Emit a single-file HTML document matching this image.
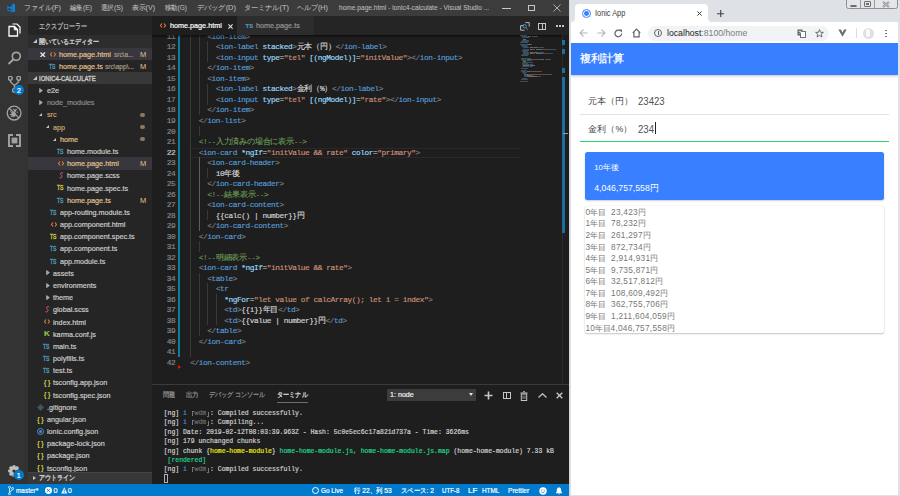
<!DOCTYPE html><html><head><meta charset="utf-8"><style>
*{margin:0;padding:0;box-sizing:border-box}
html,body{width:900px;height:496px;overflow:hidden;background:#1e1e1e}
body{position:relative;font-family:"Liberation Sans",sans-serif}
.a{position:absolute}
.t{position:absolute;white-space:pre;line-height:1;-webkit-text-stroke:0.2px}
#ion .t,.nostroke{-webkit-text-stroke:0}
#ion .hdr{-webkit-text-stroke:0.3px}
.m{font-family:"Liberation Mono",monospace}
.cj{letter-spacing:-0.2px}
</style></head><body>

<div class="a" style="left:0;top:0;width:569px;height:16px;background:#3c3c3c"></div>
<svg class="a" style="left:6px;top:3px" width="10" height="10" viewBox="0 0 10 10">
<path d="M6.4 0.6 L9 0.9 V8.8 L6.4 9.3 Z" fill="#0e84d8"/>
<path d="M9 8.8 L6.4 9.3 L1 7.6 L1.6 6.8 L6.6 7.6 Z" fill="#0a78cc"/>
<path d="M0.6 2.6 L3.6 4.2 L5.8 2.4 L6.4 3 V6.4 L5.8 6.9 L3.6 5.1 L0.6 6.6 L1.5 4.6 Z" fill="#0d80d4"/>
</svg>
<div class="t" id="gen_1" style="left:24.00px;top:4.30px;font-size:7.3px;color:#b8b8b8;-webkit-text-stroke:0.1px;transform:scaleX(0.9912);transform-origin:0 0;">ファイル(F)</div>
<div class="t" id="gen_2" style="left:70.00px;top:4.30px;font-size:7.3px;color:#b8b8b8;-webkit-text-stroke:0.1px;transform:scaleX(0.9269);transform-origin:0 0;">編集(E)</div>
<div class="t" id="gen_3" style="left:101.00px;top:4.30px;font-size:7.3px;color:#b8b8b8;-webkit-text-stroke:0.1px;transform:scaleX(0.9269);transform-origin:0 0;">選択(S)</div>
<div class="t" id="gen_4" style="left:132.00px;top:4.30px;font-size:7.3px;color:#b8b8b8;-webkit-text-stroke:0.1px;transform:scaleX(0.9691);transform-origin:0 0;">表示(V)</div>
<div class="t" id="gen_5" style="left:165.00px;top:4.30px;font-size:7.3px;color:#b8b8b8;-webkit-text-stroke:0.1px;transform:scaleX(0.8962);transform-origin:0 0;">移動(G)</div>
<div class="t" id="gen_6" style="left:197.00px;top:4.30px;font-size:7.3px;color:#b8b8b8;-webkit-text-stroke:0.1px;transform:scaleX(1.0225);transform-origin:0 0;">デバッグ(D)</div>
<div class="t" id="gen_7" style="left:244.00px;top:4.30px;font-size:7.3px;color:#b8b8b8;-webkit-text-stroke:0.1px;transform:scaleX(1.0152);transform-origin:0 0;">ターミナル(T)</div>
<div class="t" id="gen_8" style="left:297.00px;top:4.30px;font-size:7.3px;color:#b8b8b8;-webkit-text-stroke:0.1px;transform:scaleX(0.9955);transform-origin:0 0;">ヘルプ(H)</div>
<div class="t" id="gen_9" style="left:338.80px;top:4.30px;font-size:7.3px;color:#b8b8b8;-webkit-text-stroke:0.1px;transform:scaleX(0.9039);transform-origin:0 0;">home.page.html - ionic4-calculate - Visual Studio ...</div>
<div class="a" style="left:502px;top:7.8px;width:8.5px;height:0.8px;background:#c8c8c8"></div>
<div class="a" style="left:528px;top:4.8px;width:6.5px;height:6.5px;border:0.8px solid #c8c8c8"></div>
<svg class="a" style="left:553px;top:4.2px" width="8" height="8"><path d="M0.5 0.5 L7.5 7.5 M7.5 0.5 L0.5 7.5" stroke="#c8c8c8" stroke-width="0.8"/></svg>
<div class="a" style="left:0;top:16px;width:28px;height:468px;background:#333333"></div>
<svg class="a" style="left:8px;top:23px" width="13" height="14" viewBox="0 0 13 14">
<path d="M4.5 1 H9 L12 4 V10.5" fill="none" stroke="#ffffff" stroke-width="1.2"/>
<path d="M1 3.5 H6.5 L9.5 6.5 V13 H1 Z" fill="none" stroke="#ffffff" stroke-width="1.3"/>
<path d="M6.3 3.5 V6.8 H9.5" fill="#ffffff" stroke="#ffffff" stroke-width="1"/>
</svg>
<svg class="a" style="left:7px;top:51px" width="15" height="14" viewBox="0 0 15 14">
<circle cx="9.3" cy="5.3" r="4" fill="none" stroke="#a2a2a2" stroke-width="1.7"/>
<path d="M6.5 8.2 L1.5 13" stroke="#a2a2a2" stroke-width="1.9"/>
</svg>
<svg class="a" style="left:8px;top:76px" width="13" height="17" viewBox="0 0 13 17">
<circle cx="2.3" cy="2.3" r="1.9" fill="none" stroke="#a2a2a2" stroke-width="1.35"/>
<circle cx="10.7" cy="2.3" r="1.9" fill="none" stroke="#a2a2a2" stroke-width="1.35"/>
<circle cx="6.5" cy="14.3" r="1.9" fill="none" stroke="#a2a2a2" stroke-width="1.35"/>
<path d="M2.5 4.2 V6 L6.5 9.5 V12.3 M10.5 4.2 V6 L6.5 9.5" fill="none" stroke="#a2a2a2" stroke-width="1.35"/>
</svg>
<div class="a" style="left:14px;top:85px;width:10px;height:10px;border-radius:50%;background:#007acc"></div>
<div class="t" style="left:14px;top:86.5px;width:10px;text-align:center;font-size:7px;color:#fff">2</div>
<svg class="a" style="left:6px;top:105px" width="16" height="16" viewBox="0 0 16 16">
<circle cx="8.1" cy="8.1" r="6.9" fill="none" stroke="#a2a2a2" stroke-width="1.3"/>
<path d="M3.3 3.3 L12.9 12.9" stroke="#a2a2a2" stroke-width="1.3"/>
<ellipse cx="7.6" cy="9.3" rx="2.3" ry="2.6" fill="#a2a2a2"/>
<circle cx="9" cy="5.6" r="1.3" fill="#a2a2a2"/>
<path d="M4.3 6.5 L6 7.7 M3.8 9.5 H5.5 M4.5 12 L6 10.8 M12 7 L10.8 7.5 M7.2 3.8 L8 5 M10.8 3.8 L10 5" stroke="#a2a2a2" stroke-width="0.9"/>
</svg>
<svg class="a" style="left:7.8px;top:134px" width="13" height="13" viewBox="0 0 13 13">
<path d="M5 1 H1 V12 H5 M8 1 H12 V12 H8" fill="none" stroke="#a2a2a2" stroke-width="1.9"/>
<rect x="3.6" y="3.6" width="5.8" height="5.8" fill="#a2a2a2"/>
</svg>
<svg class="a" style="left:8.2px;top:464.5px" width="12" height="12" viewBox="0 0 12 12">
<path d="M10.31 4.38 L11.86 4.69 L11.86 7.31 L10.31 7.62 L10.19 7.90 L11.07 9.21 L9.21 11.07 L7.90 10.19 L7.62 10.31 L7.31 11.86 L4.69 11.86 L4.38 10.31 L4.10 10.19 L2.79 11.07 L0.93 9.21 L1.81 7.90 L1.69 7.62 L0.14 7.31 L0.14 4.69 L1.69 4.38 L1.81 4.10 L0.93 2.79 L2.79 0.93 L4.10 1.81 L4.38 1.69 L4.69 0.14 L7.31 0.14 L7.62 1.69 L7.90 1.81 L9.21 0.93 L11.07 2.79 L10.19 4.10 Z" fill="#c0c0c0"/>
<circle cx="6" cy="6" r="1.6" fill="#333"/>
</svg>
<div class="a" style="left:13.8px;top:470.3px;width:10px;height:10px;border-radius:50%;background:#007acc;box-shadow:0 0 0 0.5px #333"></div>
<div class="t" style="left:13.8px;top:472px;width:10px;text-align:center;font-size:7px;color:#fff">1</div>
<div class="a" style="left:28px;top:16px;width:124px;height:468px;background:#252526"></div>
<div class="t" id="gen_10" style="left:39.20px;top:23.10px;font-size:7.5px;color:#bbbbbb;transform:scaleX(0.7578);transform-origin:0 0;">エクスプローラー</div>
<div class="a" style="left:28px;top:35px;width:124px;height:13px;background:#2d2d2e"></div>
<div class="a" style="left:33px;top:39px;width:0;height:0;border-left:4px solid transparent;border-bottom:4px solid #c5c5c5"></div>
<div class="t" id="gen_11" style="left:39.20px;top:38.20px;font-size:7px;color:#cccccc;-webkit-text-stroke:0.35px;transform:scaleX(0.8629);transform-origin:0 0;">開いているエディター</div>
<div class="a" style="left:28px;top:48px;width:124px;height:12px;background:#37373d"></div>
<svg class="a" style="left:40px;top:51.5px" width="5.5" height="5.5"><path d="M0.5 0.5 L5 5 M5 0.5 L0.5 5" stroke="#e8e8e8" stroke-width="1.3"/></svg>
<svg class="a" style="left:49.5px;top:51.5px" width="6" height="5" viewBox="0 0 6 5"><path d="M2 0.5 L0.5 2.5 L2 4.5 M4 0.5 L5.5 2.5 L4 4.5" fill="none" stroke="#e37933" stroke-width="1.1"/></svg>
<div class="t" id="treeref" style="left:59.00px;top:50.90px;font-size:8px;color:#e2c08d;transform:scaleX(0.9028);transform-origin:0 0;">home.page.html</div>
<div class="t" id="gen_13" style="left:113.80px;top:52.00px;font-size:6.8px;color:#a59a86;transform:scaleX(0.9507);transform-origin:0 0;">src\a...</div>
<div class="t" style="left:140px;top:51px;font-size:7.5px;color:#e2c08d;-webkit-text-stroke:0">M</div>
<div class="t" style="left:48.5px;top:63.6px;font-size:6.3px;color:#519aba;-webkit-text-stroke:0.35px;transform:scaleX(0.8);transform-origin:0 0">TS</div>
<div class="t" style="left:59.00px;top:63.10px;font-size:8px;color:#e2c08d;transform:scaleX(0.9028);transform-origin:0 0;">home.page.ts</div>
<div class="t" id="gen_14" style="left:104.90px;top:64.20px;font-size:6.8px;color:#a59a86;transform:scaleX(0.9751);transform-origin:0 0;">src\app\...</div>
<div class="t" style="left:140px;top:63px;font-size:7.5px;color:#e2c08d;-webkit-text-stroke:0">M</div>
<div class="a" style="left:28px;top:72px;width:124px;height:12px;background:#383838"></div>
<div class="a" style="left:33px;top:76px;width:0;height:0;border-left:4px solid transparent;border-bottom:4px solid #c5c5c5"></div>
<div class="t" id="gen_15" style="left:39.20px;top:74.80px;font-size:7px;color:#cccccc;-webkit-text-stroke:0.35px;transform:scaleX(0.8540);transform-origin:0 0;">IONIC4-CALCULATE</div>
<div class="a" style="left:28px;top:84px;width:124px;height:388px;overflow:hidden">
<svg class="a" style="left:11.40px;top:3.79px" width="4" height="5.2"><path d="M0.6 0.5 L3.4 2.6 L0.6 4.7 Z" fill="#a8a8a8" stroke="#c5c5c5" stroke-width="0.6"/></svg>
<div class="t" style="left:18.70px;top:3.09px;font-size:8px;color:#cccccc;transform:scaleX(0.9028);transform-origin:0 0;">e2e</div>
<svg class="a" style="left:11.40px;top:15.97px" width="4" height="5.2"><path d="M0.6 0.5 L3.4 2.6 L0.6 4.7 Z" fill="#a8a8a8" stroke="#c5c5c5" stroke-width="0.6"/></svg>
<div class="t" style="left:18.70px;top:15.27px;font-size:8px;color:#8c8c8c;transform:scaleX(0.9028);transform-origin:0 0;">node_modules</div>
<div class="a" style="left:11.40px;top:29.25px;width:0;height:0;border-left:3.5px solid transparent;border-bottom:3.5px solid #c5c5c5"></div>
<div class="t" style="left:18.70px;top:27.45px;font-size:8px;color:#c9a46f;transform:scaleX(0.9028);transform-origin:0 0;">src</div>
<div class="a" style="left:112.2px;top:28.55px;width:4.5px;height:4.5px;border-radius:50%;background:#8a7a5e"></div>
<div class="a" style="left:18.05px;top:41.43px;width:0;height:0;border-left:3.5px solid transparent;border-bottom:3.5px solid #c5c5c5"></div>
<div class="t" style="left:25.45px;top:39.63px;font-size:8px;color:#c9a46f;transform:scaleX(0.9028);transform-origin:0 0;">app</div>
<div class="a" style="left:112.2px;top:40.73px;width:4.5px;height:4.5px;border-radius:50%;background:#8a7a5e"></div>
<div class="a" style="left:24.70px;top:53.61px;width:0;height:0;border-left:3.5px solid transparent;border-bottom:3.5px solid #c5c5c5"></div>
<div class="t" style="left:32.20px;top:51.81px;font-size:8px;color:#e2c08d;transform:scaleX(0.9028);transform-origin:0 0;">home</div>
<div class="a" style="left:112.2px;top:52.91px;width:4.5px;height:4.5px;border-radius:50%;background:#8a7a5e"></div>
<div class="t" style="left:28.95px;top:64.89px;font-size:6.3px;color:#519aba;-webkit-text-stroke:0.35px;transform:scaleX(0.8);transform-origin:0 0">TS</div>
<div class="t" style="left:38.95px;top:63.99px;font-size:8px;color:#cccccc;transform:scaleX(0.9028);transform-origin:0 0;">home.module.ts</div>
<div class="a" style="left:0;top:73.38px;width:124px;height:12.18px;background:#37373d"></div>
<svg class="a" style="left:29.95px;top:76.97px" width="6" height="5" viewBox="0 0 6 5"><path d="M2 0.5 L0.5 2.5 L2 4.5 M4 0.5 L5.5 2.5 L4 4.5" fill="none" stroke="#e37933" stroke-width="1.1"/></svg>
<div class="t" style="left:38.95px;top:76.17px;font-size:8px;color:#e2c08d;transform:scaleX(0.9028);transform-origin:0 0;">home.page.html</div>
<div class="t" style="left:112px;top:76.27px;font-size:7.5px;color:#e2c08d;-webkit-text-stroke:0">M</div>
<svg class="a" style="left:30.95px;top:88.15px" width="5" height="7" viewBox="0 0 5 7"><path d="M4.2 1.2 C3.5 0.2 1.2 0.4 1.6 2 C1.9 3.2 3.6 3.4 3 4.9 C2.5 6.2 0.6 6.4 0.4 5.4" fill="none" stroke="#f55385" stroke-width="0.9"/></svg>
<div class="t" style="left:38.95px;top:88.35px;font-size:8px;color:#cccccc;transform:scaleX(0.9028);transform-origin:0 0;">home.page.scss</div>
<div class="t" style="left:28.95px;top:101.42999999999999px;font-size:6.3px;color:#cbcb41;-webkit-text-stroke:0.35px;transform:scaleX(0.8);transform-origin:0 0">TS</div>
<div class="t" style="left:38.95px;top:100.53px;font-size:8px;color:#cccccc;transform:scaleX(0.9028);transform-origin:0 0;">home.page.spec.ts</div>
<div class="t" style="left:28.95px;top:113.61px;font-size:6.3px;color:#519aba;-webkit-text-stroke:0.35px;transform:scaleX(0.8);transform-origin:0 0">TS</div>
<div class="t" style="left:38.95px;top:112.71px;font-size:8px;color:#e2c08d;transform:scaleX(0.9028);transform-origin:0 0;">home.page.ts</div>
<div class="t" style="left:112px;top:112.81px;font-size:7.5px;color:#e2c08d;-webkit-text-stroke:0">M</div>
<div class="t" style="left:22.2px;top:125.78999999999999px;font-size:6.3px;color:#519aba;-webkit-text-stroke:0.35px;transform:scaleX(0.8);transform-origin:0 0">TS</div>
<div class="t" style="left:32.20px;top:124.89px;font-size:8px;color:#cccccc;transform:scaleX(0.9028);transform-origin:0 0;">app-routing.module.ts</div>
<svg class="a" style="left:23.2px;top:137.87px" width="6" height="5" viewBox="0 0 6 5"><path d="M2 0.5 L0.5 2.5 L2 4.5 M4 0.5 L5.5 2.5 L4 4.5" fill="none" stroke="#e37933" stroke-width="1.1"/></svg>
<div class="t" style="left:32.20px;top:137.07px;font-size:8px;color:#cccccc;transform:scaleX(0.9028);transform-origin:0 0;">app.component.html</div>
<div class="t" style="left:22.2px;top:150.15px;font-size:6.3px;color:#cbcb41;-webkit-text-stroke:0.35px;transform:scaleX(0.8);transform-origin:0 0">TS</div>
<div class="t" style="left:32.20px;top:149.25px;font-size:8px;color:#cccccc;transform:scaleX(0.9028);transform-origin:0 0;">app.component.spec.ts</div>
<div class="t" style="left:22.2px;top:162.32999999999998px;font-size:6.3px;color:#519aba;-webkit-text-stroke:0.35px;transform:scaleX(0.8);transform-origin:0 0">TS</div>
<div class="t" style="left:32.20px;top:161.43px;font-size:8px;color:#cccccc;transform:scaleX(0.9028);transform-origin:0 0;">app.component.ts</div>
<div class="t" style="left:22.2px;top:174.51px;font-size:6.3px;color:#519aba;-webkit-text-stroke:0.35px;transform:scaleX(0.8);transform-origin:0 0">TS</div>
<div class="t" style="left:32.20px;top:173.61px;font-size:8px;color:#cccccc;transform:scaleX(0.9028);transform-origin:0 0;">app.module.ts</div>
<svg class="a" style="left:18.05px;top:186.49px" width="4" height="5.2"><path d="M0.6 0.5 L3.4 2.6 L0.6 4.7 Z" fill="#a8a8a8" stroke="#c5c5c5" stroke-width="0.6"/></svg>
<div class="t" style="left:25.45px;top:185.79px;font-size:8px;color:#cccccc;transform:scaleX(0.9028);transform-origin:0 0;">assets</div>
<svg class="a" style="left:18.05px;top:198.67px" width="4" height="5.2"><path d="M0.6 0.5 L3.4 2.6 L0.6 4.7 Z" fill="#a8a8a8" stroke="#c5c5c5" stroke-width="0.6"/></svg>
<div class="t" style="left:25.45px;top:197.97px;font-size:8px;color:#cccccc;transform:scaleX(0.9028);transform-origin:0 0;">environments</div>
<svg class="a" style="left:18.05px;top:210.85px" width="4" height="5.2"><path d="M0.6 0.5 L3.4 2.6 L0.6 4.7 Z" fill="#a8a8a8" stroke="#c5c5c5" stroke-width="0.6"/></svg>
<div class="t" style="left:25.45px;top:210.15px;font-size:8px;color:#cccccc;transform:scaleX(0.9028);transform-origin:0 0;">theme</div>
<svg class="a" style="left:17.45px;top:222.13px" width="5" height="7" viewBox="0 0 5 7"><path d="M4.2 1.2 C3.5 0.2 1.2 0.4 1.6 2 C1.9 3.2 3.6 3.4 3 4.9 C2.5 6.2 0.6 6.4 0.4 5.4" fill="none" stroke="#f55385" stroke-width="0.9"/></svg>
<div class="t" style="left:25.45px;top:222.33px;font-size:8px;color:#cccccc;transform:scaleX(0.9028);transform-origin:0 0;">global.scss</div>
<svg class="a" style="left:16.45px;top:235.31px" width="6" height="5" viewBox="0 0 6 5"><path d="M2 0.5 L0.5 2.5 L2 4.5 M4 0.5 L5.5 2.5 L4 4.5" fill="none" stroke="#e37933" stroke-width="1.1"/></svg>
<div class="t" style="left:25.45px;top:234.51px;font-size:8px;color:#cccccc;transform:scaleX(0.9028);transform-origin:0 0;">index.html</div>
<div class="t" style="left:15.95px;top:245.99px;font-size:8px;font-weight:bold;color:#8dc149">K</div>
<div class="t" style="left:25.45px;top:246.69px;font-size:8px;color:#cccccc;transform:scaleX(0.9028);transform-origin:0 0;">karma.conf.js</div>
<div class="t" style="left:15.45px;top:259.77000000000004px;font-size:6.3px;color:#519aba;-webkit-text-stroke:0.35px;transform:scaleX(0.8);transform-origin:0 0">TS</div>
<div class="t" style="left:25.45px;top:258.87px;font-size:8px;color:#cccccc;transform:scaleX(0.9028);transform-origin:0 0;">main.ts</div>
<div class="t" style="left:15.45px;top:271.95000000000005px;font-size:6.3px;color:#519aba;-webkit-text-stroke:0.35px;transform:scaleX(0.8);transform-origin:0 0">TS</div>
<div class="t" style="left:25.45px;top:271.05px;font-size:8px;color:#cccccc;transform:scaleX(0.9028);transform-origin:0 0;">polyfills.ts</div>
<div class="t" style="left:15.45px;top:284.13px;font-size:6.3px;color:#519aba;-webkit-text-stroke:0.35px;transform:scaleX(0.8);transform-origin:0 0">TS</div>
<div class="t" style="left:25.45px;top:283.23px;font-size:8px;color:#cccccc;transform:scaleX(0.9028);transform-origin:0 0;">test.ts</div>
<div class="t" style="left:15.649999999999999px;top:295.10999999999996px;font-size:7px;font-weight:bold;color:#cbcb41;letter-spacing:1.3px;-webkit-text-stroke:0">{}</div>
<div class="t" style="left:25.45px;top:295.41px;font-size:8px;color:#cccccc;transform:scaleX(0.9028);transform-origin:0 0;">tsconfig.app.json</div>
<div class="t" style="left:15.649999999999999px;top:307.28999999999996px;font-size:7px;font-weight:bold;color:#cbcb41;letter-spacing:1.3px;-webkit-text-stroke:0">{}</div>
<div class="t" style="left:25.45px;top:307.59px;font-size:8px;color:#cccccc;transform:scaleX(0.9028);transform-origin:0 0;">tsconfig.spec.json</div>
<div class="a" style="left:10.2px;top:320.57px;width:5px;height:5px;transform:rotate(45deg);background:#41535b"></div>
<div class="t" style="left:18.70px;top:319.77px;font-size:8px;color:#cccccc;transform:scaleX(0.9028);transform-origin:0 0;">.gitignore</div>
<div class="t" style="left:8.899999999999999px;top:331.65px;font-size:7px;font-weight:bold;color:#cbcb41;letter-spacing:1.3px;-webkit-text-stroke:0">{}</div>
<div class="t" style="left:18.70px;top:331.95px;font-size:8px;color:#cccccc;transform:scaleX(0.9028);transform-origin:0 0;">angular.json</div>
<div class="a" style="left:9.2px;top:343.93px;width:7px;height:7px;border-radius:50%;border:1.2px solid #4f8fcd"></div><div class="a" style="left:11.2px;top:345.93px;width:3px;height:3px;border-radius:50%;background:#4f8fcd"></div>
<div class="t" style="left:18.70px;top:344.13px;font-size:8px;color:#cccccc;transform:scaleX(0.9028);transform-origin:0 0;">ionic.config.json</div>
<div class="t" style="left:8.899999999999999px;top:356.01px;font-size:7px;font-weight:bold;color:#cbcb41;letter-spacing:1.3px;-webkit-text-stroke:0">{}</div>
<div class="t" style="left:18.70px;top:356.31px;font-size:8px;color:#cccccc;transform:scaleX(0.9028);transform-origin:0 0;">package-lock.json</div>
<div class="t" style="left:8.899999999999999px;top:368.19px;font-size:7px;font-weight:bold;color:#cbcb41;letter-spacing:1.3px;-webkit-text-stroke:0">{}</div>
<div class="t" style="left:18.70px;top:368.49px;font-size:8px;color:#cccccc;transform:scaleX(0.9028);transform-origin:0 0;">package.json</div>
<div class="t" style="left:8.899999999999999px;top:380.37px;font-size:7px;font-weight:bold;color:#cbcb41;letter-spacing:1.3px;-webkit-text-stroke:0">{}</div>
<div class="t" style="left:18.70px;top:380.67px;font-size:8px;color:#cccccc;transform:scaleX(0.9028);transform-origin:0 0;">tsconfig.json</div>
</div>
<div class="a" style="left:28px;top:472px;width:124px;height:12px;background:#383838;border-top:1px solid #454545"></div>
<div class="a" style="left:33px;top:475.5px;width:0;height:0;border-top:2.5px solid transparent;border-bottom:2.5px solid transparent;border-left:3px solid #c5c5c5"></div>
<div class="t" id="gen_16" style="left:39.20px;top:474.40px;font-size:7px;color:#cccccc;-webkit-text-stroke:0.35px;transform:scaleX(0.8571);transform-origin:0 0;">アウトライン</div><div class="a" style="left:152px;top:16px;width:417px;height:468px;background:#1e1e1e"></div>
<div class="a" style="left:152px;top:16px;width:417px;height:19px;background:#252526"></div>
<div class="a" style="left:152px;top:16px;width:85px;height:19px;background:#1e1e1e"></div>
<div class="a" style="left:237px;top:16px;width:76.5px;height:19px;background:#2d2d2d"></div>
<svg class="a" style="left:160px;top:23.3px" width="6" height="5" viewBox="0 0 6 5"><path d="M2 0.5 L0.5 2.5 L2 4.5 M4 0.5 L5.5 2.5 L4 4.5" fill="none" stroke="#e37933" stroke-width="1.1"/></svg>
<div class="t" style="left:170.00px;top:22.40px;font-size:8px;color:#ffffff;transform:scaleX(0.9028);transform-origin:0 0;">home.page.html</div>
<svg class="a" style="left:227.8px;top:24px" width="5" height="5"><path d="M0.4 0.4 L4.6 4.6 M4.6 0.4 L0.4 4.6" stroke="#e0e0e0" stroke-width="1.1"/></svg>
<div class="t" style="left:245.5px;top:24px;font-size:5.8px;font-weight:bold;color:#519aba;letter-spacing:0.1px">TS</div>
<div class="t" style="left:255.60px;top:22.40px;font-size:8px;color:#969696;transform:scaleX(0.9028);transform-origin:0 0;">home.page.ts</div>
<svg class="a" style="left:519.5px;top:21.8px" width="10" height="9" viewBox="0 0 10 9">
<path d="M5.3 0.6 H9.2 V4.6" fill="none" stroke="#c5c5c5" stroke-width="0.9"/>
<path d="M0.6 3.6 H4 M0.6 3.6 V8.2 H4.6" fill="none" stroke="#c5c5c5" stroke-width="0.9"/>
<circle cx="4.6" cy="4.2" r="1.7" fill="none" stroke="#4d9bd6" stroke-width="0.9"/>
<path d="M5.8 5.5 L7.8 7.8" stroke="#4d9bd6" stroke-width="0.9"/>
</svg>
<div class="a" style="left:538px;top:23px;width:8px;height:7px;border:1px solid #c5c5c5"></div><div class="a" style="left:541.6px;top:23px;width:1px;height:7px;background:#c5c5c5"></div>
<div class="a" style="left:556px;top:25px;width:1.6px;height:1.6px;background:#c5c5c5"></div>
<div class="a" style="left:559.2px;top:25px;width:1.6px;height:1.6px;background:#c5c5c5"></div>
<div class="a" style="left:562.4px;top:25px;width:1.6px;height:1.6px;background:#c5c5c5"></div>
<div class="a" style="left:0;top:35px;width:569px;height:349px;overflow:hidden"><div class="a" style="left:0;top:-35px;width:569px;height:496px">
<div class="t m" style="left:160px;top:31.83px;width:15.2px;text-align:right;font-size:7.8px;letter-spacing:-0.43px;line-height:10.5px;color:#858585">11</div>
<div class="a" style="left:190.00px;top:30.93px;width:1.4px;height:10.5px;background:#393939"></div>
<div class="a" style="left:198.50px;top:30.93px;width:1.4px;height:10.5px;background:#393939"></div>
<div class="t m" style="left:190.3px;top:31.83px;font-size:7.8px;letter-spacing:-0.43px;line-height:10.5px;color:#d4d4d4;-webkit-text-stroke:0.15px"><span style="color:#d4d4d4">    </span><span style="color:#808080">&lt;</span><span style="color:#569cd6">ion-item</span><span style="color:#808080">&gt;</span></div>
<div class="t m" style="left:160px;top:42.35px;width:15.2px;text-align:right;font-size:7.8px;letter-spacing:-0.43px;line-height:10.5px;color:#858585">12</div>
<div class="a" style="left:190.00px;top:41.45px;width:1.4px;height:10.5px;background:#393939"></div>
<div class="a" style="left:198.50px;top:41.45px;width:1.4px;height:10.5px;background:#393939"></div>
<div class="a" style="left:207.00px;top:41.45px;width:1.4px;height:10.5px;background:#393939"></div>
<div class="t m" style="left:190.3px;top:42.35px;font-size:7.8px;letter-spacing:-0.43px;line-height:10.5px;color:#d4d4d4;-webkit-text-stroke:0.15px"><span style="color:#d4d4d4">      </span><span style="color:#808080">&lt;</span><span style="color:#569cd6">ion-label</span> <span style="color:#9cdcfe">stacked</span><span style="color:#808080">&gt;</span><span style="color:#d4d4d4"><span class="cj">元本（円）</span></span><span style="color:#808080">&lt;/</span><span style="color:#569cd6">ion-label</span><span style="color:#808080">&gt;</span></div>
<div class="t m" style="left:160px;top:52.87px;width:15.2px;text-align:right;font-size:7.8px;letter-spacing:-0.43px;line-height:10.5px;color:#858585">13</div>
<div class="a" style="left:190.00px;top:51.97px;width:1.4px;height:10.5px;background:#393939"></div>
<div class="a" style="left:198.50px;top:51.97px;width:1.4px;height:10.5px;background:#393939"></div>
<div class="a" style="left:207.00px;top:51.97px;width:1.4px;height:10.5px;background:#393939"></div>
<div class="t m" style="left:190.3px;top:52.87px;font-size:7.8px;letter-spacing:-0.43px;line-height:10.5px;color:#d4d4d4;-webkit-text-stroke:0.15px"><span style="color:#d4d4d4">      </span><span style="color:#808080">&lt;</span><span style="color:#569cd6">ion-input</span> <span style="color:#9cdcfe">type</span><span style="color:#d4d4d4">=</span><span style="color:#ce9178">"tel"</span> <span style="color:#9cdcfe">[(ngModel)]</span><span style="color:#d4d4d4">=</span><span style="color:#ce9178">"initValue"</span><span style="color:#808080">&gt;</span><span style="color:#808080">&lt;/</span><span style="color:#569cd6">ion-input</span><span style="color:#808080">&gt;</span></div>
<div class="t m" style="left:160px;top:63.39px;width:15.2px;text-align:right;font-size:7.8px;letter-spacing:-0.43px;line-height:10.5px;color:#858585">14</div>
<div class="a" style="left:190.00px;top:62.49px;width:1.4px;height:10.5px;background:#393939"></div>
<div class="a" style="left:198.50px;top:62.49px;width:1.4px;height:10.5px;background:#393939"></div>
<div class="t m" style="left:190.3px;top:63.39px;font-size:7.8px;letter-spacing:-0.43px;line-height:10.5px;color:#d4d4d4;-webkit-text-stroke:0.15px"><span style="color:#d4d4d4">    </span><span style="color:#808080">&lt;/</span><span style="color:#569cd6">ion-item</span><span style="color:#808080">&gt;</span></div>
<div class="t m" style="left:160px;top:73.91px;width:15.2px;text-align:right;font-size:7.8px;letter-spacing:-0.43px;line-height:10.5px;color:#858585">15</div>
<div class="a" style="left:190.00px;top:73.01px;width:1.4px;height:10.5px;background:#393939"></div>
<div class="a" style="left:198.50px;top:73.01px;width:1.4px;height:10.5px;background:#393939"></div>
<div class="t m" style="left:190.3px;top:73.91px;font-size:7.8px;letter-spacing:-0.43px;line-height:10.5px;color:#d4d4d4;-webkit-text-stroke:0.15px"><span style="color:#d4d4d4">    </span><span style="color:#808080">&lt;</span><span style="color:#569cd6">ion-item</span><span style="color:#808080">&gt;</span></div>
<div class="t m" style="left:160px;top:84.43px;width:15.2px;text-align:right;font-size:7.8px;letter-spacing:-0.43px;line-height:10.5px;color:#858585">16</div>
<div class="a" style="left:190.00px;top:83.53px;width:1.4px;height:10.5px;background:#393939"></div>
<div class="a" style="left:198.50px;top:83.53px;width:1.4px;height:10.5px;background:#393939"></div>
<div class="a" style="left:207.00px;top:83.53px;width:1.4px;height:10.5px;background:#393939"></div>
<div class="t m" style="left:190.3px;top:84.43px;font-size:7.8px;letter-spacing:-0.43px;line-height:10.5px;color:#d4d4d4;-webkit-text-stroke:0.15px"><span style="color:#d4d4d4">      </span><span style="color:#808080">&lt;</span><span style="color:#569cd6">ion-label</span> <span style="color:#9cdcfe">stacked</span><span style="color:#808080">&gt;</span><span style="color:#d4d4d4"><span class="cj">金利（</span>%<span class="cj">）</span></span><span style="color:#808080">&lt;/</span><span style="color:#569cd6">ion-label</span><span style="color:#808080">&gt;</span></div>
<div class="t m" style="left:160px;top:94.95px;width:15.2px;text-align:right;font-size:7.8px;letter-spacing:-0.43px;line-height:10.5px;color:#858585">17</div>
<div class="a" style="left:190.00px;top:94.05px;width:1.4px;height:10.5px;background:#393939"></div>
<div class="a" style="left:198.50px;top:94.05px;width:1.4px;height:10.5px;background:#393939"></div>
<div class="a" style="left:207.00px;top:94.05px;width:1.4px;height:10.5px;background:#393939"></div>
<div class="t m" style="left:190.3px;top:94.95px;font-size:7.8px;letter-spacing:-0.43px;line-height:10.5px;color:#d4d4d4;-webkit-text-stroke:0.15px"><span style="color:#d4d4d4">      </span><span style="color:#808080">&lt;</span><span style="color:#569cd6">ion-input</span> <span style="color:#9cdcfe">type</span><span style="color:#d4d4d4">=</span><span style="color:#ce9178">"tel"</span> <span style="color:#9cdcfe">[(ngModel)]</span><span style="color:#d4d4d4">=</span><span style="color:#ce9178">"rate"</span><span style="color:#808080">&gt;</span><span style="color:#808080">&lt;/</span><span style="color:#569cd6">ion-input</span><span style="color:#808080">&gt;</span></div>
<div class="t m" style="left:160px;top:105.47px;width:15.2px;text-align:right;font-size:7.8px;letter-spacing:-0.43px;line-height:10.5px;color:#858585">18</div>
<div class="a" style="left:190.00px;top:104.57px;width:1.4px;height:10.5px;background:#393939"></div>
<div class="a" style="left:198.50px;top:104.57px;width:1.4px;height:10.5px;background:#393939"></div>
<div class="t m" style="left:190.3px;top:105.47px;font-size:7.8px;letter-spacing:-0.43px;line-height:10.5px;color:#d4d4d4;-webkit-text-stroke:0.15px"><span style="color:#d4d4d4">    </span><span style="color:#808080">&lt;/</span><span style="color:#569cd6">ion-item</span><span style="color:#808080">&gt;</span></div>
<div class="t m" style="left:160px;top:115.99px;width:15.2px;text-align:right;font-size:7.8px;letter-spacing:-0.43px;line-height:10.5px;color:#858585">19</div>
<div class="a" style="left:190.00px;top:115.09px;width:1.4px;height:10.5px;background:#393939"></div>
<div class="t m" style="left:190.3px;top:115.99px;font-size:7.8px;letter-spacing:-0.43px;line-height:10.5px;color:#d4d4d4;-webkit-text-stroke:0.15px"><span style="color:#d4d4d4">  </span><span style="color:#808080">&lt;/</span><span style="color:#569cd6">ion-list</span><span style="color:#808080">&gt;</span></div>
<div class="t m" style="left:160px;top:126.51px;width:15.2px;text-align:right;font-size:7.8px;letter-spacing:-0.43px;line-height:10.5px;color:#858585">20</div>
<div class="a" style="left:190.00px;top:125.61px;width:1.4px;height:10.5px;background:#393939"></div>
<div class="a" style="left:198.50px;top:125.61px;width:1.4px;height:10.5px;background:#393939"></div>
<div class="t m" style="left:160px;top:137.03px;width:15.2px;text-align:right;font-size:7.8px;letter-spacing:-0.43px;line-height:10.5px;color:#858585">21</div>
<div class="a" style="left:190.00px;top:136.13px;width:1.4px;height:10.5px;background:#393939"></div>
<div class="t m" style="left:190.3px;top:137.03px;font-size:7.8px;letter-spacing:-0.43px;line-height:10.5px;color:#d4d4d4;-webkit-text-stroke:0.15px">  <span style="color:#6a9955">&lt;!--<span class="cj">入力済みの場合に表示</span>--&gt;</span></div>
<div class="a" style="left:190px;top:147.85px;width:330px;height:10.5px;border-top:1px solid #282828;border-bottom:1px solid #282828"></div>
<div class="t m" style="left:160px;top:147.55px;width:15.2px;text-align:right;font-size:7.8px;letter-spacing:-0.43px;line-height:10.5px;color:#c6c6c6">22</div>
<div class="a" style="left:190.00px;top:146.65px;width:1.4px;height:10.5px;background:#393939"></div>
<div class="t m" style="left:190.3px;top:147.55px;font-size:7.8px;letter-spacing:-0.43px;line-height:10.5px;color:#d4d4d4;-webkit-text-stroke:0.15px"><span style="color:#d4d4d4">  </span><span style="color:#808080">&lt;</span><span style="color:#569cd6">ion-card</span> <span style="color:#9cdcfe">*ngIf</span><span style="color:#d4d4d4">=</span><span style="color:#ce9178">"initValue &amp;&amp; rate"</span> <span style="color:#9cdcfe">color</span><span style="color:#d4d4d4">=</span><span style="color:#ce9178">"primary"</span><span style="color:#808080">&gt;</span></div>
<div class="t m" style="left:160px;top:158.07px;width:15.2px;text-align:right;font-size:7.8px;letter-spacing:-0.43px;line-height:10.5px;color:#858585">23</div>
<div class="a" style="left:190.00px;top:157.17px;width:1.4px;height:10.5px;background:#393939"></div>
<div class="a" style="left:198.50px;top:157.17px;width:1.4px;height:10.5px;background:#5e5e5e"></div>
<div class="t m" style="left:190.3px;top:158.07px;font-size:7.8px;letter-spacing:-0.43px;line-height:10.5px;color:#d4d4d4;-webkit-text-stroke:0.15px"><span style="color:#d4d4d4">    </span><span style="color:#808080">&lt;</span><span style="color:#569cd6">ion-card-header</span><span style="color:#808080">&gt;</span></div>
<div class="t m" style="left:160px;top:168.59px;width:15.2px;text-align:right;font-size:7.8px;letter-spacing:-0.43px;line-height:10.5px;color:#858585">24</div>
<div class="a" style="left:190.00px;top:167.69px;width:1.4px;height:10.5px;background:#393939"></div>
<div class="a" style="left:198.50px;top:167.69px;width:1.4px;height:10.5px;background:#5e5e5e"></div>
<div class="a" style="left:207.00px;top:167.69px;width:1.4px;height:10.5px;background:#393939"></div>
<div class="t m" style="left:190.3px;top:168.59px;font-size:7.8px;letter-spacing:-0.43px;line-height:10.5px;color:#d4d4d4;-webkit-text-stroke:0.15px"><span style="color:#d4d4d4">      10<span class="cj">年後</span></span></div>
<div class="t m" style="left:160px;top:179.11px;width:15.2px;text-align:right;font-size:7.8px;letter-spacing:-0.43px;line-height:10.5px;color:#858585">25</div>
<div class="a" style="left:190.00px;top:178.21px;width:1.4px;height:10.5px;background:#393939"></div>
<div class="a" style="left:198.50px;top:178.21px;width:1.4px;height:10.5px;background:#5e5e5e"></div>
<div class="t m" style="left:190.3px;top:179.11px;font-size:7.8px;letter-spacing:-0.43px;line-height:10.5px;color:#d4d4d4;-webkit-text-stroke:0.15px"><span style="color:#d4d4d4">    </span><span style="color:#808080">&lt;/</span><span style="color:#569cd6">ion-card-header</span><span style="color:#808080">&gt;</span></div>
<div class="t m" style="left:160px;top:189.63px;width:15.2px;text-align:right;font-size:7.8px;letter-spacing:-0.43px;line-height:10.5px;color:#858585">26</div>
<div class="a" style="left:190.00px;top:188.73px;width:1.4px;height:10.5px;background:#393939"></div>
<div class="a" style="left:198.50px;top:188.73px;width:1.4px;height:10.5px;background:#5e5e5e"></div>
<div class="t m" style="left:190.3px;top:189.63px;font-size:7.8px;letter-spacing:-0.43px;line-height:10.5px;color:#d4d4d4;-webkit-text-stroke:0.15px">    <span style="color:#6a9955">&lt;!--<span class="cj">結果表示</span>--&gt;</span></div>
<div class="t m" style="left:160px;top:200.15px;width:15.2px;text-align:right;font-size:7.8px;letter-spacing:-0.43px;line-height:10.5px;color:#858585">27</div>
<div class="a" style="left:190.00px;top:199.25px;width:1.4px;height:10.5px;background:#393939"></div>
<div class="a" style="left:198.50px;top:199.25px;width:1.4px;height:10.5px;background:#5e5e5e"></div>
<div class="t m" style="left:190.3px;top:200.15px;font-size:7.8px;letter-spacing:-0.43px;line-height:10.5px;color:#d4d4d4;-webkit-text-stroke:0.15px"><span style="color:#d4d4d4">    </span><span style="color:#808080">&lt;</span><span style="color:#569cd6">ion-card-content</span><span style="color:#808080">&gt;</span></div>
<div class="t m" style="left:160px;top:210.67px;width:15.2px;text-align:right;font-size:7.8px;letter-spacing:-0.43px;line-height:10.5px;color:#858585">28</div>
<div class="a" style="left:190.00px;top:209.77px;width:1.4px;height:10.5px;background:#393939"></div>
<div class="a" style="left:198.50px;top:209.77px;width:1.4px;height:10.5px;background:#5e5e5e"></div>
<div class="a" style="left:207.00px;top:209.77px;width:1.4px;height:10.5px;background:#393939"></div>
<div class="t m" style="left:190.3px;top:210.67px;font-size:7.8px;letter-spacing:-0.43px;line-height:10.5px;color:#d4d4d4;-webkit-text-stroke:0.15px"><span style="color:#d4d4d4">      {{calc() | number}}<span class="cj">円</span></span></div>
<div class="t m" style="left:160px;top:221.19px;width:15.2px;text-align:right;font-size:7.8px;letter-spacing:-0.43px;line-height:10.5px;color:#858585">29</div>
<div class="a" style="left:190.00px;top:220.29px;width:1.4px;height:10.5px;background:#393939"></div>
<div class="a" style="left:198.50px;top:220.29px;width:1.4px;height:10.5px;background:#5e5e5e"></div>
<div class="t m" style="left:190.3px;top:221.19px;font-size:7.8px;letter-spacing:-0.43px;line-height:10.5px;color:#d4d4d4;-webkit-text-stroke:0.15px"><span style="color:#d4d4d4">    </span><span style="color:#808080">&lt;/</span><span style="color:#569cd6">ion-card-content</span><span style="color:#808080">&gt;</span></div>
<div class="t m" style="left:160px;top:231.71px;width:15.2px;text-align:right;font-size:7.8px;letter-spacing:-0.43px;line-height:10.5px;color:#858585">30</div>
<div class="a" style="left:190.00px;top:230.81px;width:1.4px;height:10.5px;background:#393939"></div>
<div class="t m" style="left:190.3px;top:231.71px;font-size:7.8px;letter-spacing:-0.43px;line-height:10.5px;color:#d4d4d4;-webkit-text-stroke:0.15px"><span style="color:#d4d4d4">  </span><span style="color:#808080">&lt;/</span><span style="color:#569cd6">ion-card</span><span style="color:#808080">&gt;</span></div>
<div class="t m" style="left:160px;top:242.23px;width:15.2px;text-align:right;font-size:7.8px;letter-spacing:-0.43px;line-height:10.5px;color:#858585">31</div>
<div class="a" style="left:190.00px;top:241.33px;width:1.4px;height:10.5px;background:#393939"></div>
<div class="a" style="left:198.50px;top:241.33px;width:1.4px;height:10.5px;background:#393939"></div>
<div class="t m" style="left:160px;top:252.75px;width:15.2px;text-align:right;font-size:7.8px;letter-spacing:-0.43px;line-height:10.5px;color:#858585">32</div>
<div class="a" style="left:190.00px;top:251.85px;width:1.4px;height:10.5px;background:#393939"></div>
<div class="t m" style="left:190.3px;top:252.75px;font-size:7.8px;letter-spacing:-0.43px;line-height:10.5px;color:#d4d4d4;-webkit-text-stroke:0.15px">  <span style="color:#6a9955">&lt;!--<span class="cj">明細表示</span>--&gt;</span></div>
<div class="t m" style="left:160px;top:263.27px;width:15.2px;text-align:right;font-size:7.8px;letter-spacing:-0.43px;line-height:10.5px;color:#858585">33</div>
<div class="a" style="left:190.00px;top:262.37px;width:1.4px;height:10.5px;background:#393939"></div>
<div class="t m" style="left:190.3px;top:263.27px;font-size:7.8px;letter-spacing:-0.43px;line-height:10.5px;color:#d4d4d4;-webkit-text-stroke:0.15px"><span style="color:#d4d4d4">  </span><span style="color:#808080">&lt;</span><span style="color:#569cd6">ion-card</span> <span style="color:#9cdcfe">*ngIf</span><span style="color:#d4d4d4">=</span><span style="color:#ce9178">"initValue &amp;&amp; rate"</span><span style="color:#808080">&gt;</span></div>
<div class="t m" style="left:160px;top:273.79px;width:15.2px;text-align:right;font-size:7.8px;letter-spacing:-0.43px;line-height:10.5px;color:#858585">34</div>
<div class="a" style="left:190.00px;top:272.89px;width:1.4px;height:10.5px;background:#393939"></div>
<div class="a" style="left:198.50px;top:272.89px;width:1.4px;height:10.5px;background:#393939"></div>
<div class="t m" style="left:190.3px;top:273.79px;font-size:7.8px;letter-spacing:-0.43px;line-height:10.5px;color:#d4d4d4;-webkit-text-stroke:0.15px"><span style="color:#d4d4d4">    </span><span style="color:#808080">&lt;</span><span style="color:#569cd6">table</span><span style="color:#808080">&gt;</span></div>
<div class="t m" style="left:160px;top:284.31px;width:15.2px;text-align:right;font-size:7.8px;letter-spacing:-0.43px;line-height:10.5px;color:#858585">35</div>
<div class="a" style="left:190.00px;top:283.41px;width:1.4px;height:10.5px;background:#393939"></div>
<div class="a" style="left:198.50px;top:283.41px;width:1.4px;height:10.5px;background:#393939"></div>
<div class="a" style="left:207.00px;top:283.41px;width:1.4px;height:10.5px;background:#393939"></div>
<div class="t m" style="left:190.3px;top:284.31px;font-size:7.8px;letter-spacing:-0.43px;line-height:10.5px;color:#d4d4d4;-webkit-text-stroke:0.15px"><span style="color:#d4d4d4">      </span><span style="color:#808080">&lt;</span><span style="color:#569cd6">tr</span></div>
<div class="t m" style="left:160px;top:294.83px;width:15.2px;text-align:right;font-size:7.8px;letter-spacing:-0.43px;line-height:10.5px;color:#858585">36</div>
<div class="a" style="left:190.00px;top:293.93px;width:1.4px;height:10.5px;background:#393939"></div>
<div class="a" style="left:198.50px;top:293.93px;width:1.4px;height:10.5px;background:#393939"></div>
<div class="a" style="left:207.00px;top:293.93px;width:1.4px;height:10.5px;background:#393939"></div>
<div class="a" style="left:215.50px;top:293.93px;width:1.4px;height:10.5px;background:#393939"></div>
<div class="t m" style="left:190.3px;top:294.83px;font-size:7.8px;letter-spacing:-0.43px;line-height:10.5px;color:#d4d4d4;-webkit-text-stroke:0.15px">        <span style="color:#9cdcfe">*ngFor</span><span style="color:#d4d4d4">=</span><span style="color:#ce9178">"let value of calcArray(); let i = index"</span><span style="color:#808080">&gt;</span></div>
<div class="t m" style="left:160px;top:305.35px;width:15.2px;text-align:right;font-size:7.8px;letter-spacing:-0.43px;line-height:10.5px;color:#858585">37</div>
<div class="a" style="left:190.00px;top:304.45px;width:1.4px;height:10.5px;background:#393939"></div>
<div class="a" style="left:198.50px;top:304.45px;width:1.4px;height:10.5px;background:#393939"></div>
<div class="a" style="left:207.00px;top:304.45px;width:1.4px;height:10.5px;background:#393939"></div>
<div class="a" style="left:215.50px;top:304.45px;width:1.4px;height:10.5px;background:#393939"></div>
<div class="t m" style="left:190.3px;top:305.35px;font-size:7.8px;letter-spacing:-0.43px;line-height:10.5px;color:#d4d4d4;-webkit-text-stroke:0.15px"><span style="color:#d4d4d4">        </span><span style="color:#808080">&lt;</span><span style="color:#569cd6">td</span><span style="color:#808080">&gt;</span><span style="color:#d4d4d4">{{i}}<span class="cj">年目</span></span><span style="color:#808080">&lt;/</span><span style="color:#569cd6">td</span><span style="color:#808080">&gt;</span></div>
<div class="t m" style="left:160px;top:315.87px;width:15.2px;text-align:right;font-size:7.8px;letter-spacing:-0.43px;line-height:10.5px;color:#858585">38</div>
<div class="a" style="left:190.00px;top:314.97px;width:1.4px;height:10.5px;background:#393939"></div>
<div class="a" style="left:198.50px;top:314.97px;width:1.4px;height:10.5px;background:#393939"></div>
<div class="a" style="left:207.00px;top:314.97px;width:1.4px;height:10.5px;background:#393939"></div>
<div class="a" style="left:215.50px;top:314.97px;width:1.4px;height:10.5px;background:#393939"></div>
<div class="t m" style="left:190.3px;top:315.87px;font-size:7.8px;letter-spacing:-0.43px;line-height:10.5px;color:#d4d4d4;-webkit-text-stroke:0.15px"><span style="color:#d4d4d4">        </span><span style="color:#808080">&lt;</span><span style="color:#569cd6">td</span><span style="color:#808080">&gt;</span><span style="color:#d4d4d4">{{value | number}}<span class="cj">円</span></span><span style="color:#808080">&lt;/</span><span style="color:#569cd6">td</span><span style="color:#808080">&gt;</span></div>
<div class="t m" style="left:160px;top:326.39px;width:15.2px;text-align:right;font-size:7.8px;letter-spacing:-0.43px;line-height:10.5px;color:#858585">39</div>
<div class="a" style="left:190.00px;top:325.49px;width:1.4px;height:10.5px;background:#393939"></div>
<div class="a" style="left:198.50px;top:325.49px;width:1.4px;height:10.5px;background:#393939"></div>
<div class="t m" style="left:190.3px;top:326.39px;font-size:7.8px;letter-spacing:-0.43px;line-height:10.5px;color:#d4d4d4;-webkit-text-stroke:0.15px"><span style="color:#d4d4d4">    </span><span style="color:#808080">&lt;/</span><span style="color:#569cd6">table</span><span style="color:#808080">&gt;</span></div>
<div class="t m" style="left:160px;top:336.91px;width:15.2px;text-align:right;font-size:7.8px;letter-spacing:-0.43px;line-height:10.5px;color:#858585">40</div>
<div class="a" style="left:190.00px;top:336.01px;width:1.4px;height:10.5px;background:#393939"></div>
<div class="t m" style="left:190.3px;top:336.91px;font-size:7.8px;letter-spacing:-0.43px;line-height:10.5px;color:#d4d4d4;-webkit-text-stroke:0.15px"><span style="color:#d4d4d4">  </span><span style="color:#808080">&lt;/</span><span style="color:#569cd6">ion-card</span><span style="color:#808080">&gt;</span></div>
<div class="t m" style="left:160px;top:347.43px;width:15.2px;text-align:right;font-size:7.8px;letter-spacing:-0.43px;line-height:10.5px;color:#858585">41</div>
<div class="a" style="left:190.00px;top:346.53px;width:1.4px;height:10.5px;background:#393939"></div>
<div class="t m" style="left:160px;top:357.95px;width:15.2px;text-align:right;font-size:7.8px;letter-spacing:-0.43px;line-height:10.5px;color:#858585">42</div>
<div class="t m" style="left:190.3px;top:357.95px;font-size:7.8px;letter-spacing:-0.43px;line-height:10.5px;color:#d4d4d4;-webkit-text-stroke:0.15px"><span style="color:#808080">&lt;/</span><span style="color:#569cd6">ion-content</span><span style="color:#808080">&gt;</span></div>
<div class="a" style="left:178px;top:35px;width:2px;height:321.9px;background:#0c7d9d"></div>
<div class="a" style="left:178px;top:365px;width:0;height:0;border-top:2.5px solid transparent;border-bottom:2.5px solid transparent;border-left:3px solid #e51400"></div>
</div></div>
<div class="a" style="left:152px;top:35px;width:410px;height:3px;background:linear-gradient(rgba(0,0,0,0.55),rgba(0,0,0,0))"></div><div class="a" style="left:0;top:0;opacity:0.4">
<div class="a" style="left:520.00px;top:35.20px;width:0.56px;height:0.65px;background:#808080"></div>
<div class="a" style="left:520.56px;top:35.20px;width:5.60px;height:0.65px;background:#569cd6"></div>
<div class="a" style="left:526.16px;top:35.20px;width:0.56px;height:0.65px;background:#808080"></div>
<div class="a" style="left:521.12px;top:36.32px;width:0.56px;height:0.65px;background:#808080"></div>
<div class="a" style="left:521.68px;top:36.32px;width:6.16px;height:0.65px;background:#569cd6"></div>
<div class="a" style="left:528.40px;top:36.32px;width:2.80px;height:0.65px;background:#9cdcfe"></div>
<div class="a" style="left:531.76px;top:36.32px;width:5.04px;height:0.65px;background:#ce9178"></div>
<div class="a" style="left:536.80px;top:36.32px;width:0.56px;height:0.65px;background:#808080"></div>
<div class="a" style="left:522.24px;top:37.43px;width:0.56px;height:0.65px;background:#808080"></div>
<div class="a" style="left:522.80px;top:37.43px;width:5.04px;height:0.65px;background:#569cd6"></div>
<div class="a" style="left:527.84px;top:37.43px;width:0.56px;height:0.65px;background:#808080"></div>
<div class="a" style="left:523.36px;top:38.55px;width:2.24px;height:0.65px;background:#d4d4d4"></div>
<div class="a" style="left:522.24px;top:39.66px;width:1.12px;height:0.65px;background:#808080"></div>
<div class="a" style="left:523.36px;top:39.66px;width:5.04px;height:0.65px;background:#569cd6"></div>
<div class="a" style="left:528.40px;top:39.66px;width:0.56px;height:0.65px;background:#808080"></div>
<div class="a" style="left:521.12px;top:40.78px;width:1.12px;height:0.65px;background:#808080"></div>
<div class="a" style="left:522.24px;top:40.78px;width:6.16px;height:0.65px;background:#569cd6"></div>
<div class="a" style="left:528.40px;top:40.78px;width:0.56px;height:0.65px;background:#808080"></div>
<div class="a" style="left:520.00px;top:41.89px;width:1.12px;height:0.65px;background:#808080"></div>
<div class="a" style="left:521.12px;top:41.89px;width:5.60px;height:0.65px;background:#569cd6"></div>
<div class="a" style="left:526.72px;top:41.89px;width:0.56px;height:0.65px;background:#808080"></div>
<div class="a" style="left:520.00px;top:44.12px;width:0.56px;height:0.65px;background:#808080"></div>
<div class="a" style="left:520.56px;top:44.12px;width:6.16px;height:0.65px;background:#569cd6"></div>
<div class="a" style="left:527.28px;top:44.12px;width:3.92px;height:0.65px;background:#d4d4d4"></div>
<div class="a" style="left:531.20px;top:44.12px;width:0.56px;height:0.65px;background:#808080"></div>
<div class="a" style="left:521.12px;top:45.23px;width:0.56px;height:0.65px;background:#808080"></div>
<div class="a" style="left:521.68px;top:45.23px;width:4.48px;height:0.65px;background:#569cd6"></div>
<div class="a" style="left:526.16px;top:45.23px;width:0.56px;height:0.65px;background:#808080"></div>
<div class="a" style="left:522.24px;top:46.35px;width:0.56px;height:0.65px;background:#808080"></div>
<div class="a" style="left:522.80px;top:46.35px;width:4.48px;height:0.65px;background:#569cd6"></div>
<div class="a" style="left:527.28px;top:46.35px;width:0.56px;height:0.65px;background:#808080"></div>
<div class="a" style="left:523.36px;top:47.47px;width:0.56px;height:0.65px;background:#808080"></div>
<div class="a" style="left:523.92px;top:47.47px;width:5.04px;height:0.65px;background:#569cd6"></div>
<div class="a" style="left:529.52px;top:47.47px;width:3.92px;height:0.65px;background:#d4d4d4"></div>
<div class="a" style="left:533.44px;top:47.47px;width:0.56px;height:0.65px;background:#808080"></div>
<div class="a" style="left:534.00px;top:47.47px;width:2.80px;height:0.65px;background:#d4d4d4"></div>
<div class="a" style="left:536.80px;top:47.47px;width:1.12px;height:0.65px;background:#808080"></div>
<div class="a" style="left:537.92px;top:47.47px;width:5.04px;height:0.65px;background:#569cd6"></div>
<div class="a" style="left:542.96px;top:47.47px;width:0.56px;height:0.65px;background:#808080"></div>
<div class="a" style="left:523.36px;top:48.58px;width:0.56px;height:0.65px;background:#808080"></div>
<div class="a" style="left:523.92px;top:48.58px;width:5.04px;height:0.65px;background:#569cd6"></div>
<div class="a" style="left:529.52px;top:48.58px;width:2.24px;height:0.65px;background:#9cdcfe"></div>
<div class="a" style="left:532.32px;top:48.58px;width:2.80px;height:0.65px;background:#ce9178"></div>
<div class="a" style="left:535.68px;top:48.58px;width:6.16px;height:0.65px;background:#9cdcfe"></div>
<div class="a" style="left:542.40px;top:48.58px;width:6.16px;height:0.65px;background:#ce9178"></div>
<div class="a" style="left:548.56px;top:48.58px;width:0.56px;height:0.65px;background:#808080"></div>
<div class="a" style="left:549.12px;top:48.58px;width:1.12px;height:0.65px;background:#808080"></div>
<div class="a" style="left:550.24px;top:48.58px;width:5.04px;height:0.65px;background:#569cd6"></div>
<div class="a" style="left:555.28px;top:48.58px;width:0.56px;height:0.65px;background:#808080"></div>
<div class="a" style="left:522.24px;top:49.70px;width:1.12px;height:0.65px;background:#808080"></div>
<div class="a" style="left:523.36px;top:49.70px;width:4.48px;height:0.65px;background:#569cd6"></div>
<div class="a" style="left:527.84px;top:49.70px;width:0.56px;height:0.65px;background:#808080"></div>
<div class="a" style="left:522.24px;top:50.81px;width:0.56px;height:0.65px;background:#808080"></div>
<div class="a" style="left:522.80px;top:50.81px;width:4.48px;height:0.65px;background:#569cd6"></div>
<div class="a" style="left:527.28px;top:50.81px;width:0.56px;height:0.65px;background:#808080"></div>
<div class="a" style="left:523.36px;top:51.93px;width:0.56px;height:0.65px;background:#808080"></div>
<div class="a" style="left:523.92px;top:51.93px;width:5.04px;height:0.65px;background:#569cd6"></div>
<div class="a" style="left:529.52px;top:51.93px;width:3.92px;height:0.65px;background:#d4d4d4"></div>
<div class="a" style="left:533.44px;top:51.93px;width:0.56px;height:0.65px;background:#808080"></div>
<div class="a" style="left:534.00px;top:51.93px;width:2.80px;height:0.65px;background:#d4d4d4"></div>
<div class="a" style="left:536.80px;top:51.93px;width:1.12px;height:0.65px;background:#808080"></div>
<div class="a" style="left:537.92px;top:51.93px;width:5.04px;height:0.65px;background:#569cd6"></div>
<div class="a" style="left:542.96px;top:51.93px;width:0.56px;height:0.65px;background:#808080"></div>
<div class="a" style="left:523.36px;top:53.04px;width:0.56px;height:0.65px;background:#808080"></div>
<div class="a" style="left:523.92px;top:53.04px;width:5.04px;height:0.65px;background:#569cd6"></div>
<div class="a" style="left:529.52px;top:53.04px;width:2.24px;height:0.65px;background:#9cdcfe"></div>
<div class="a" style="left:532.32px;top:53.04px;width:2.80px;height:0.65px;background:#ce9178"></div>
<div class="a" style="left:535.68px;top:53.04px;width:6.16px;height:0.65px;background:#9cdcfe"></div>
<div class="a" style="left:542.40px;top:53.04px;width:3.36px;height:0.65px;background:#ce9178"></div>
<div class="a" style="left:545.76px;top:53.04px;width:0.56px;height:0.65px;background:#808080"></div>
<div class="a" style="left:546.32px;top:53.04px;width:1.12px;height:0.65px;background:#808080"></div>
<div class="a" style="left:547.44px;top:53.04px;width:5.04px;height:0.65px;background:#569cd6"></div>
<div class="a" style="left:552.48px;top:53.04px;width:0.56px;height:0.65px;background:#808080"></div>
<div class="a" style="left:522.24px;top:54.16px;width:1.12px;height:0.65px;background:#808080"></div>
<div class="a" style="left:523.36px;top:54.16px;width:4.48px;height:0.65px;background:#569cd6"></div>
<div class="a" style="left:527.84px;top:54.16px;width:0.56px;height:0.65px;background:#808080"></div>
<div class="a" style="left:521.12px;top:55.27px;width:1.12px;height:0.65px;background:#808080"></div>
<div class="a" style="left:522.24px;top:55.27px;width:4.48px;height:0.65px;background:#569cd6"></div>
<div class="a" style="left:526.72px;top:55.27px;width:0.56px;height:0.65px;background:#808080"></div>
<div class="a" style="left:521.12px;top:57.50px;width:9.52px;height:0.65px;background:#6a9955"></div>
<div class="a" style="left:521.12px;top:58.62px;width:0.56px;height:0.65px;background:#808080"></div>
<div class="a" style="left:521.68px;top:58.62px;width:4.48px;height:0.65px;background:#569cd6"></div>
<div class="a" style="left:526.72px;top:58.62px;width:2.80px;height:0.65px;background:#9cdcfe"></div>
<div class="a" style="left:530.08px;top:58.62px;width:10.64px;height:0.65px;background:#ce9178"></div>
<div class="a" style="left:541.28px;top:58.62px;width:2.80px;height:0.65px;background:#9cdcfe"></div>
<div class="a" style="left:544.64px;top:58.62px;width:5.04px;height:0.65px;background:#ce9178"></div>
<div class="a" style="left:549.68px;top:58.62px;width:0.56px;height:0.65px;background:#808080"></div>
<div class="a" style="left:522.24px;top:59.73px;width:0.56px;height:0.65px;background:#808080"></div>
<div class="a" style="left:522.80px;top:59.73px;width:8.40px;height:0.65px;background:#569cd6"></div>
<div class="a" style="left:531.20px;top:59.73px;width:0.56px;height:0.65px;background:#808080"></div>
<div class="a" style="left:523.36px;top:60.84px;width:2.24px;height:0.65px;background:#d4d4d4"></div>
<div class="a" style="left:522.24px;top:61.96px;width:1.12px;height:0.65px;background:#808080"></div>
<div class="a" style="left:523.36px;top:61.96px;width:8.40px;height:0.65px;background:#569cd6"></div>
<div class="a" style="left:531.76px;top:61.96px;width:0.56px;height:0.65px;background:#808080"></div>
<div class="a" style="left:522.24px;top:63.08px;width:6.16px;height:0.65px;background:#6a9955"></div>
<div class="a" style="left:522.24px;top:64.19px;width:0.56px;height:0.65px;background:#808080"></div>
<div class="a" style="left:522.80px;top:64.19px;width:8.96px;height:0.65px;background:#569cd6"></div>
<div class="a" style="left:531.76px;top:64.19px;width:0.56px;height:0.65px;background:#808080"></div>
<div class="a" style="left:523.36px;top:65.31px;width:4.48px;height:0.65px;background:#d4d4d4"></div>
<div class="a" style="left:528.40px;top:65.31px;width:0.56px;height:0.65px;background:#d4d4d4"></div>
<div class="a" style="left:529.52px;top:65.31px;width:5.04px;height:0.65px;background:#d4d4d4"></div>
<div class="a" style="left:522.24px;top:66.42px;width:1.12px;height:0.65px;background:#808080"></div>
<div class="a" style="left:523.36px;top:66.42px;width:8.96px;height:0.65px;background:#569cd6"></div>
<div class="a" style="left:532.32px;top:66.42px;width:0.56px;height:0.65px;background:#808080"></div>
<div class="a" style="left:521.12px;top:67.53px;width:1.12px;height:0.65px;background:#808080"></div>
<div class="a" style="left:522.24px;top:67.53px;width:4.48px;height:0.65px;background:#569cd6"></div>
<div class="a" style="left:526.72px;top:67.53px;width:0.56px;height:0.65px;background:#808080"></div>
<div class="a" style="left:521.12px;top:69.77px;width:6.16px;height:0.65px;background:#6a9955"></div>
<div class="a" style="left:521.12px;top:70.88px;width:0.56px;height:0.65px;background:#808080"></div>
<div class="a" style="left:521.68px;top:70.88px;width:4.48px;height:0.65px;background:#569cd6"></div>
<div class="a" style="left:526.72px;top:70.88px;width:2.80px;height:0.65px;background:#9cdcfe"></div>
<div class="a" style="left:530.08px;top:70.88px;width:10.64px;height:0.65px;background:#ce9178"></div>
<div class="a" style="left:540.72px;top:70.88px;width:0.56px;height:0.65px;background:#808080"></div>
<div class="a" style="left:522.24px;top:72.00px;width:0.56px;height:0.65px;background:#808080"></div>
<div class="a" style="left:522.80px;top:72.00px;width:2.80px;height:0.65px;background:#569cd6"></div>
<div class="a" style="left:525.60px;top:72.00px;width:0.56px;height:0.65px;background:#808080"></div>
<div class="a" style="left:523.36px;top:73.11px;width:0.56px;height:0.65px;background:#808080"></div>
<div class="a" style="left:523.92px;top:73.11px;width:1.12px;height:0.65px;background:#569cd6"></div>
<div class="a" style="left:524.48px;top:74.22px;width:3.36px;height:0.65px;background:#9cdcfe"></div>
<div class="a" style="left:528.40px;top:74.22px;width:22.96px;height:0.65px;background:#ce9178"></div>
<div class="a" style="left:551.36px;top:74.22px;width:0.56px;height:0.65px;background:#808080"></div>
<div class="a" style="left:524.48px;top:75.34px;width:0.56px;height:0.65px;background:#808080"></div>
<div class="a" style="left:525.04px;top:75.34px;width:1.12px;height:0.65px;background:#569cd6"></div>
<div class="a" style="left:526.16px;top:75.34px;width:0.56px;height:0.65px;background:#808080"></div>
<div class="a" style="left:526.72px;top:75.34px;width:3.92px;height:0.65px;background:#d4d4d4"></div>
<div class="a" style="left:530.64px;top:75.34px;width:1.12px;height:0.65px;background:#808080"></div>
<div class="a" style="left:531.76px;top:75.34px;width:1.12px;height:0.65px;background:#569cd6"></div>
<div class="a" style="left:532.88px;top:75.34px;width:0.56px;height:0.65px;background:#808080"></div>
<div class="a" style="left:524.48px;top:76.46px;width:0.56px;height:0.65px;background:#808080"></div>
<div class="a" style="left:525.04px;top:76.46px;width:1.12px;height:0.65px;background:#569cd6"></div>
<div class="a" style="left:526.16px;top:76.46px;width:0.56px;height:0.65px;background:#808080"></div>
<div class="a" style="left:526.72px;top:76.46px;width:3.92px;height:0.65px;background:#d4d4d4"></div>
<div class="a" style="left:531.20px;top:76.46px;width:0.56px;height:0.65px;background:#d4d4d4"></div>
<div class="a" style="left:532.32px;top:76.46px;width:5.04px;height:0.65px;background:#d4d4d4"></div>
<div class="a" style="left:537.36px;top:76.46px;width:1.12px;height:0.65px;background:#808080"></div>
<div class="a" style="left:538.48px;top:76.46px;width:1.12px;height:0.65px;background:#569cd6"></div>
<div class="a" style="left:539.60px;top:76.46px;width:0.56px;height:0.65px;background:#808080"></div>
<div class="a" style="left:522.24px;top:77.57px;width:1.12px;height:0.65px;background:#808080"></div>
<div class="a" style="left:523.36px;top:77.57px;width:2.80px;height:0.65px;background:#569cd6"></div>
<div class="a" style="left:526.16px;top:77.57px;width:0.56px;height:0.65px;background:#808080"></div>
<div class="a" style="left:521.12px;top:78.69px;width:1.12px;height:0.65px;background:#808080"></div>
<div class="a" style="left:522.24px;top:78.69px;width:4.48px;height:0.65px;background:#569cd6"></div>
<div class="a" style="left:526.72px;top:78.69px;width:0.56px;height:0.65px;background:#808080"></div>
<div class="a" style="left:520.00px;top:80.91px;width:1.12px;height:0.65px;background:#808080"></div>
<div class="a" style="left:521.12px;top:80.91px;width:6.16px;height:0.65px;background:#569cd6"></div>
<div class="a" style="left:527.28px;top:80.91px;width:0.56px;height:0.65px;background:#808080"></div>
</div>
<div class="a" style="left:562px;top:35px;width:1px;height:349px;background:#2b2b2b"></div>
<div class="a" style="left:562.2px;top:40px;width:2.9px;height:4.5px;background:#1b6e9e"></div>
<div class="a" style="left:562.2px;top:49px;width:2.9px;height:4.8px;background:#1b6e9e"></div>
<div class="a" style="left:562.2px;top:68.3px;width:2.9px;height:4.7px;background:#1b6e9e"></div>
<div class="a" style="left:562.2px;top:77.4px;width:2.9px;height:155.5px;background:#1b6e9e"></div>
<div class="a" style="left:562.5px;top:133px;width:5px;height:1px;background:#a0a0a0"></div>
<div class="a" style="left:152px;top:384.3px;width:417px;height:99.7px;background:#1e1e1e;border-top:1.2px solid #3a3a3a"></div>
<div class="t" id="gen3_1" style="left:163.00px;top:391.30px;font-size:7px;color:#969696;transform:scaleX(0.8786);transform-origin:0 0;">問題</div>
<div class="t" id="gen3_2" style="left:185.80px;top:391.30px;font-size:7px;color:#969696;transform:scaleX(0.9214);transform-origin:0 0;">出力</div>
<div class="t" id="gen3_3" style="left:209.30px;top:391.30px;font-size:7px;color:#969696;transform:scaleX(0.8699);transform-origin:0 0;">デバッグ コンソール</div>
<div class="t" id="gen3_4" style="left:276.90px;top:391.30px;font-size:7px;color:#e7e7e7;transform:scaleX(0.8771);transform-origin:0 0;">ターミナル</div>
<div class="a" style="left:277px;top:401.7px;width:31px;height:0.8px;background:#e7e7e7;opacity:0.4"></div>
<div class="a" style="left:387px;top:389px;width:89px;height:11.5px;background:#3c3c3c"></div>
<div class="t" id="gen3_5" style="left:390.00px;top:391.20px;font-size:7.5px;color:#f0f0f0;transform:scaleX(0.9508);transform-origin:0 0;">1: node</div>
<div class="a" style="left:468.5px;top:393px;width:0;height:0;border-left:2.5px solid transparent;border-right:2.5px solid transparent;border-top:3.5px solid #e0e0e0"></div>
<svg class="a" style="left:484px;top:391px" width="9" height="9"><path d="M4.5 0.5 V8.5 M0.5 4.5 H8.5" stroke="#c5c5c5" stroke-width="1.6"/></svg>
<div class="a" style="left:502.5px;top:391.5px;width:8px;height:7.5px;border:1px solid #c5c5c5;border-top-width:1.5px"></div><div class="a" style="left:506.2px;top:391.5px;width:1px;height:7.5px;background:#c5c5c5"></div>
<svg class="a" style="left:520px;top:390.5px" width="8" height="10"><path d="M0.5 2 H7.5 M3 0.8 H5" stroke="#c5c5c5" stroke-width="1"/><rect x="1.3" y="3" width="5.4" height="6.5" fill="none" stroke="#c5c5c5" stroke-width="1"/><path d="M2.8 4.5 V8 M4 4.5 V8 M5.2 4.5 V8" stroke="#c5c5c5" stroke-width="0.5"/></svg>
<svg class="a" style="left:537.5px;top:392.5px" width="9" height="5"><path d="M0.5 4.5 L4.5 0.7 L8.5 4.5" fill="none" stroke="#c5c5c5" stroke-width="1.2"/></svg>
<svg class="a" style="left:556px;top:392px" width="7" height="7"><path d="M0.7 0.7 L6.3 6.3 M6.3 0.7 L0.7 6.3" stroke="#c5c5c5" stroke-width="1.4"/></svg>
<div class="t m" style="left:163.7px;top:409.11px;font-size:6.45px;line-height:9.38px"><span style="color:#cccccc">[ng] </span><span style="color:#3b8eea">i </span><span style="color:#6b6b6b;display:inline-block;width:19.35px;position:relative"><span style="position:absolute;left:1.6px;top:1.6px;width:2px;height:5px;border-left:0.7px solid #777;border-top:0.7px solid #777"></span>&nbsp;wdm<span style="position:absolute;left:16.2px;top:2.6px;width:2px;height:5px;border-right:0.7px solid #777;border-bottom:0.7px solid #777"></span></span><span style="color:#cccccc">: Compiled successfully.</span></div>
<div class="t m" style="left:163.7px;top:418.49px;font-size:6.45px;line-height:9.38px"><span style="color:#cccccc">[ng] </span><span style="color:#3b8eea">i </span><span style="color:#6b6b6b;display:inline-block;width:19.35px;position:relative"><span style="position:absolute;left:1.6px;top:1.6px;width:2px;height:5px;border-left:0.7px solid #777;border-top:0.7px solid #777"></span>&nbsp;wdm<span style="position:absolute;left:16.2px;top:2.6px;width:2px;height:5px;border-right:0.7px solid #777;border-bottom:0.7px solid #777"></span></span><span style="color:#cccccc">: Compiling...</span></div>
<div class="t m" style="left:163.7px;top:427.87px;font-size:6.45px;line-height:9.38px"><span style="color:#cccccc">[ng] Date: 2019-02-12T08:03:39.963Z - Hash: 5c0e5ec6c17a821d737a - Time: 3626ms</span></div>
<div class="t m" style="left:163.7px;top:437.25px;font-size:6.45px;line-height:9.38px"><span style="color:#cccccc">[ng] 179 unchanged chunks</span></div>
<div class="t m" style="left:163.7px;top:446.63px;font-size:6.45px;line-height:9.38px"><span style="color:#cccccc">[ng] chunk {</span><span style="color:#e5e510">home-home-module</span><span style="color:#cccccc">} </span><span style="color:#23d18b">home-home-module.js, home-home-module.js.map</span><span style="color:#cccccc"> (home-home-module) 7.33 kB</span></div>
<div class="t m" style="left:163.7px;top:456.01px;font-size:6.45px;line-height:9.38px"><span style="color:#23d18b"> [rendered]</span></div>
<div class="t m" style="left:163.7px;top:465.39px;font-size:6.45px;line-height:9.38px"><span style="color:#cccccc">[ng] </span><span style="color:#3b8eea">i </span><span style="color:#6b6b6b;display:inline-block;width:19.35px;position:relative"><span style="position:absolute;left:1.6px;top:1.6px;width:2px;height:5px;border-left:0.7px solid #777;border-top:0.7px solid #777"></span>&nbsp;wdm<span style="position:absolute;left:16.2px;top:2.6px;width:2px;height:5px;border-right:0.7px solid #777;border-bottom:0.7px solid #777"></span></span><span style="color:#cccccc">: Compiled successfully.</span></div>
<div class="a" style="left:163.5px;top:473.86px;width:4px;height:9.5px;border:0.8px solid #b0b0b0"></div>
<div class="a" style="left:0;top:484px;width:569px;height:12px;background:#007acc"></div>
<svg class="a" style="left:8px;top:486px" width="6" height="9" viewBox="0 0 6 9"><circle cx="1.5" cy="1.3" r="1" fill="none" stroke="#fff" stroke-width="0.8"/><circle cx="1.5" cy="7.7" r="1" fill="none" stroke="#fff" stroke-width="0.8"/><circle cx="4.6" cy="2.5" r="1" fill="none" stroke="#fff" stroke-width="0.8"/><path d="M1.5 2.3 V6.7 M4.6 3.5 C4.6 5 1.5 5 1.5 6.5" fill="none" stroke="#fff" stroke-width="0.8"/></svg>
<div class="t" id="gen3_6" style="left:15.60px;top:487.00px;font-size:7.3px;color:#ffffff;transform:scaleX(0.8830);transform-origin:0 0;">master*</div>
<div class="a" style="left:45px;top:487.3px;width:6.8px;height:6.8px;border-radius:50%;background:#fff"></div><svg class="a" style="left:45px;top:487.3px" width="7" height="7"><path d="M2.1 2.1 L4.7 4.7 M4.7 2.1 L2.1 4.7" stroke="#007acc" stroke-width="1"/></svg>
<div class="t" style="left:53.60px;top:487.00px;font-size:7.3px;color:#ffffff;">0</div>
<svg class="a" style="left:60.5px;top:487px" width="6.5" height="7"><path d="M3.25 0.3 L6.3 6.6 H0.2 Z" fill="#fff"/><path d="M3.25 2.3 V4.6 M3.25 5.2 V6" stroke="#007acc" stroke-width="0.9"/></svg>
<div class="t" style="left:67.80px;top:487.00px;font-size:7.3px;color:#ffffff;">0</div>
<div class="a" style="left:311.5px;top:486.8px;width:7px;height:7px;border-radius:50%;border:1px solid #fff"></div>
<div class="t" id="gen3_7" style="left:321.00px;top:487.00px;font-size:7.3px;color:#ffffff;transform:scaleX(0.8745);transform-origin:0 0;">Go Live</div>
<div class="t" id="gen3_8" style="left:354.00px;top:487.00px;font-size:7.3px;color:#ffffff;transform:scaleX(0.9105);transform-origin:0 0;">行 22、列 53</div>
<div class="t" id="gen3_9" style="left:400.60px;top:487.00px;font-size:7.3px;color:#ffffff;transform:scaleX(0.9135);transform-origin:0 0;">スペース: 2</div>
<div class="t" id="gen3_10" style="left:441.70px;top:487.00px;font-size:7.3px;color:#ffffff;transform:scaleX(0.8363);transform-origin:0 0;">UTF-8</div>
<div class="t" id="gen3_11" style="left:467.60px;top:487.00px;font-size:7.3px;color:#ffffff;transform:scaleX(1.1039);transform-origin:0 0;">LF</div>
<div class="t" id="gen3_12" style="left:482.30px;top:487.00px;font-size:7.3px;color:#ffffff;transform:scaleX(0.8755);transform-origin:0 0;">HTML</div>
<div class="t" id="gen3_13" style="left:507.80px;top:487.00px;font-size:7.3px;color:#ffffff;transform:scaleX(0.9009);transform-origin:0 0;">Prettier</div>
<svg class="a" style="left:538.5px;top:486.5px" width="8" height="8"><circle cx="4" cy="4" r="3.7" fill="#fff"/><circle cx="2.8" cy="3" r="0.6" fill="#007acc"/><circle cx="5.2" cy="3" r="0.6" fill="#007acc"/><path d="M2.2 4.8 Q4 6.6 5.8 4.8" fill="none" stroke="#007acc" stroke-width="0.7"/></svg>
<svg class="a" style="left:554.5px;top:486.5px" width="8" height="8"><path d="M4 0.5 C1.8 0.5 1.8 2.5 1.8 4.2 L0.8 6.2 H7.2 L6.2 4.2 C6.2 2.5 6.2 0.5 4 0.5 Z M3 6.7 Q4 8.2 5 6.7" fill="#fff"/></svg><div class="a" style="left:569px;top:0;width:331px;height:496px;background:#dee1e6"></div>
<div class="a" style="left:569px;top:0;width:1px;height:496px;background:#d2d5da"></div>
<div class="a" style="left:846.3px;top:-3px;width:51.4px;height:12.3px;border:1px solid #8e8f91;border-radius:0 0 2.5px 2.5px;background:#e3e5e8"></div>
<div class="a" style="left:860.3px;top:0;width:1px;height:9px;background:#9a9b9d"></div>
<div class="a" style="left:874.3px;top:0;width:1px;height:9px;background:#9a9b9d"></div>
<div class="a" style="left:850.3px;top:4.7px;width:6.5px;height:2.6px;border:1px solid #6e6e6e;border-radius:1px;background:#f4f4f4"></div>
<div class="a" style="left:864px;top:1.2px;width:6.5px;height:5.8px;border:1px solid #6e6e6e;border-radius:1px"></div><div class="a" style="left:866px;top:3px;width:2.6px;height:2.3px;border:0.8px solid #6e6e6e"></div>
<svg class="a" style="left:882px;top:0.5px" width="8" height="7"><path d="M1 1 L7 6 M7 1 L1 6" stroke="#7a7a7a" stroke-width="1.8"/><path d="M1 1 L7 6 M7 1 L1 6" stroke="#f0f0f0" stroke-width="0.7"/></svg>
<div class="a" style="left:575px;top:4.4px;width:133.3px;height:18px;background:#ffffff;border-radius:4px 4px 0 0"></div>
<div class="a" style="left:571px;top:18px;width:4px;height:4px;background:#fff"></div><div class="a" style="left:571px;top:14px;width:4px;height:8px;background:#dee1e6;border-radius:0 0 4px 0"></div>
<div class="a" style="left:708.3px;top:18px;width:4px;height:4px;background:#fff"></div><div class="a" style="left:708.3px;top:14px;width:4px;height:8px;background:#dee1e6;border-radius:0 0 0 4px"></div>
<div class="a" style="left:581.8px;top:9px;width:9.2px;height:9.2px;border-radius:50%;border:1.2px solid #3880ff"></div><div class="a" style="left:584px;top:11.2px;width:4.8px;height:4.8px;border-radius:50%;background:#3880ff"></div>
<div class="t" id="gen4_1" style="left:595.20px;top:9.20px;font-size:8.3px;color:#3c4043;-webkit-text-stroke:0;transform:scaleX(0.8875);transform-origin:0 0;">Ionic App</div>
<svg class="a" style="left:696.5px;top:11px" width="5" height="5"><path d="M0.4 0.4 L4.6 4.6 M4.6 0.4 L0.4 4.6" stroke="#3c4043" stroke-width="1"/></svg>
<svg class="a" style="left:716.5px;top:9.8px" width="7.5" height="7.5"><path d="M3.75 0 V7.5 M0 3.75 H7.5" stroke="#3c4043" stroke-width="1.1"/></svg>
<div class="a" style="left:571px;top:43px;width:327px;height:1px;background:#3880ff"></div>
<div class="a" style="left:571px;top:22px;width:327px;height:21px;background:#ffffff"></div>
<svg class="a" style="left:578.5px;top:29px" width="9" height="8"><path d="M8.5 4 H1 M4.5 0.5 L1 4 L4.5 7.5" fill="none" stroke="#b5b7ba" stroke-width="1.1"/></svg>
<svg class="a" style="left:596.5px;top:29px" width="9" height="8"><path d="M0.5 4 H8 M4.5 0.5 L8 4 L4.5 7.5" fill="none" stroke="#b5b7ba" stroke-width="1.1"/></svg>
<svg class="a" style="left:613.5px;top:28.5px" width="9" height="9"><path d="M7.6 4.5 A3.3 3.3 0 1 1 6.6 2.1" fill="none" stroke="#5f6368" stroke-width="1.2"/><path d="M5.2 0.6 H8 V3.4 Z" fill="#5f6368"/></svg>
<svg class="a" style="left:631.5px;top:28px" width="9" height="10"><path d="M0.8 4.8 L4.5 1 L8.2 4.8 M1.9 3.8 V8.8 H7.1 V3.8" fill="none" stroke="#5f6368" stroke-width="1.2"/></svg>
<div class="a" style="left:648.2px;top:26px;width:180.5px;height:14.5px;border-radius:7.5px;background:#f1f3f4"></div>
<div class="a" style="left:654px;top:29.2px;width:8px;height:8px;border-radius:50%;border:1px solid #5f6368"></div><div class="a" style="left:657.6px;top:32.3px;width:1px;height:3px;background:#5f6368"></div><div class="a" style="left:657.6px;top:31px;width:1px;height:0.8px;background:#5f6368"></div>
<div class="t" id="gen4_2" style="left:667.20px;top:29.00px;font-size:8.3px;color:#202124;-webkit-text-stroke:0;transform:scaleX(1.0486);transform-origin:0 0;">localhost<span style="color:#7a7d80">:8100/home</span></div>
<svg class="a" style="left:797px;top:29px" width="9" height="9"><rect x="0.5" y="0.5" width="5" height="6" fill="#5f6368"/><rect x="3.5" y="2.5" width="5" height="6" fill="#fff" stroke="#5f6368" stroke-width="0.9"/><path d="M1.5 2.5 H4.5 M3 1.5 V3 M1.8 5 L4 3" stroke="#fff" stroke-width="0.6"/></svg>
<svg class="a" style="left:815px;top:28.8px" width="9" height="9"><path d="M4.5 0.6 L5.6 3.3 L8.4 3.4 L6.2 5.2 L7 8 L4.5 6.4 L2 8 L2.8 5.2 L0.6 3.4 L3.4 3.3 Z" fill="none" stroke="#5f6368" stroke-width="0.9"/></svg>
<svg class="a" style="left:837.5px;top:29px" width="9" height="8"><path d="M0.3 0.5 L4.5 7.8 L8.7 0.5 L6 0.5 L4.5 3.8 L3 0.5 Z" fill="#6b6e72"/></svg>
<div class="a" style="left:855.5px;top:28px;width:1px;height:10px;background:#dadce0"></div>
<div class="a" style="left:862.5px;top:27.5px;width:11px;height:11px;border-radius:50%;background:#e0e0e0"></div><div class="a" style="left:866px;top:29px;width:4px;height:8px;border-radius:2px;background:#fafafa"></div>
<div class="a" style="left:885.3px;top:29.5px;width:1.6px;height:1.6px;border-radius:50%;background:#5f6368"></div>
<div class="a" style="left:885.3px;top:32.5px;width:1.6px;height:1.6px;border-radius:50%;background:#5f6368"></div>
<div class="a" style="left:885.3px;top:35.5px;width:1.6px;height:1.6px;border-radius:50%;background:#5f6368"></div>
<div class="a" style="left:571px;top:43.5px;width:327px;height:451px;background:#ffffff;overflow:hidden" id="ion">
<div class="a" style="left:0;top:0;width:327px;height:31.2px;background:#3880ff;box-shadow:0 1px 2.5px rgba(0,0,0,0.25)"></div>
<div class="t hdr" style="left:9px;top:9.5px;font-size:11px;color:#ffffff">複利計算</div>
<div class="t" style="left:17.40px;top:53.60px;font-size:8.8px;color:#444;">元本（円）</div>
<div class="t" id="val1" style="left:66.60px;top:53.20px;font-size:10px;color:#505050;transform:scaleX(0.9564);transform-origin:0 0;">23423</div>
<div class="a" style="left:9px;top:70.3px;width:309px;height:0.8px;background:#e2e2e2"></div>
<div class="t" style="left:17.40px;top:81.40px;font-size:8.8px;color:#444;">金利（%）</div>
<div class="t" style="left:66.60px;top:81.00px;font-size:10px;color:#505050;transform:scaleX(0.9564);transform-origin:0 0;">234</div>
<div class="a" style="left:83.5px;top:78.3px;width:0.7px;height:12.5px;background:#222"></div>
<div class="a" style="left:9px;top:97.3px;width:309px;height:1.3px;background:#2dd36f"></div>
<div class="a" style="left:14px;top:108.5px;width:299px;height:48px;background:#3880ff;border-radius:2.5px;box-shadow:0 1px 2px rgba(0,0,0,0.2)"></div>
<div class="t" style="left:23.2px;top:120.1px;font-size:7.8px;color:#ffffff">10年後</div>
<div class="t" style="left:23.2px;top:140.3px;font-size:8.7px;color:#ffffff">4,046,757,558円</div>
<div class="a" style="left:14px;top:162.5px;width:299px;height:127px;background:#ffffff;border-radius:2px;box-shadow:0 1px 2px rgba(0,0,0,0.22),0 0 1px rgba(0,0,0,0.18)"></div>
<div class="t" style="left:14.6px;top:164.30px;font-size:8.3px;color:#777">0年目</div>
<div class="t" style="left:40px;top:164.30px;font-size:8.3px;letter-spacing:0.27px;color:#777">23,423円</div>
<div class="t" style="left:14.6px;top:175.88px;font-size:8.3px;color:#777">1年目</div>
<div class="t" style="left:40px;top:175.88px;font-size:8.3px;letter-spacing:0.27px;color:#777">78,232円</div>
<div class="t" style="left:14.6px;top:187.46px;font-size:8.3px;color:#777">2年目</div>
<div class="t" style="left:40px;top:187.46px;font-size:8.3px;letter-spacing:0.27px;color:#777">261,297円</div>
<div class="t" style="left:14.6px;top:199.04px;font-size:8.3px;color:#777">3年目</div>
<div class="t" style="left:40px;top:199.04px;font-size:8.3px;letter-spacing:0.27px;color:#777">872,734円</div>
<div class="t" style="left:14.6px;top:210.62px;font-size:8.3px;color:#777">4年目</div>
<div class="t" style="left:40px;top:210.62px;font-size:8.3px;letter-spacing:0.27px;color:#777">2,914,931円</div>
<div class="t" style="left:14.6px;top:222.20px;font-size:8.3px;color:#777">5年目</div>
<div class="t" style="left:40px;top:222.20px;font-size:8.3px;letter-spacing:0.27px;color:#777">9,735,871円</div>
<div class="t" style="left:14.6px;top:233.78px;font-size:8.3px;color:#777">6年目</div>
<div class="t" style="left:40px;top:233.78px;font-size:8.3px;letter-spacing:0.27px;color:#777">32,517,812円</div>
<div class="t" style="left:14.6px;top:245.36px;font-size:8.3px;color:#777">7年目</div>
<div class="t" style="left:40px;top:245.36px;font-size:8.3px;letter-spacing:0.27px;color:#777">108,609,492円</div>
<div class="t" style="left:14.6px;top:256.94px;font-size:8.3px;color:#777">8年目</div>
<div class="t" style="left:40px;top:256.94px;font-size:8.3px;letter-spacing:0.27px;color:#777">362,755,706円</div>
<div class="t" style="left:14.6px;top:268.52px;font-size:8.3px;color:#777">9年目</div>
<div class="t" style="left:40px;top:268.52px;font-size:8.3px;letter-spacing:0.27px;color:#777">1,211,604,059円</div>
<div class="t" style="left:14.6px;top:280.10px;font-size:8.3px;color:#777">10年目</div>
<div class="t" style="left:39.5px;top:280.10px;font-size:8.3px;letter-spacing:0.27px;color:#777">4,046,757,558円</div>
</div></body></html>
